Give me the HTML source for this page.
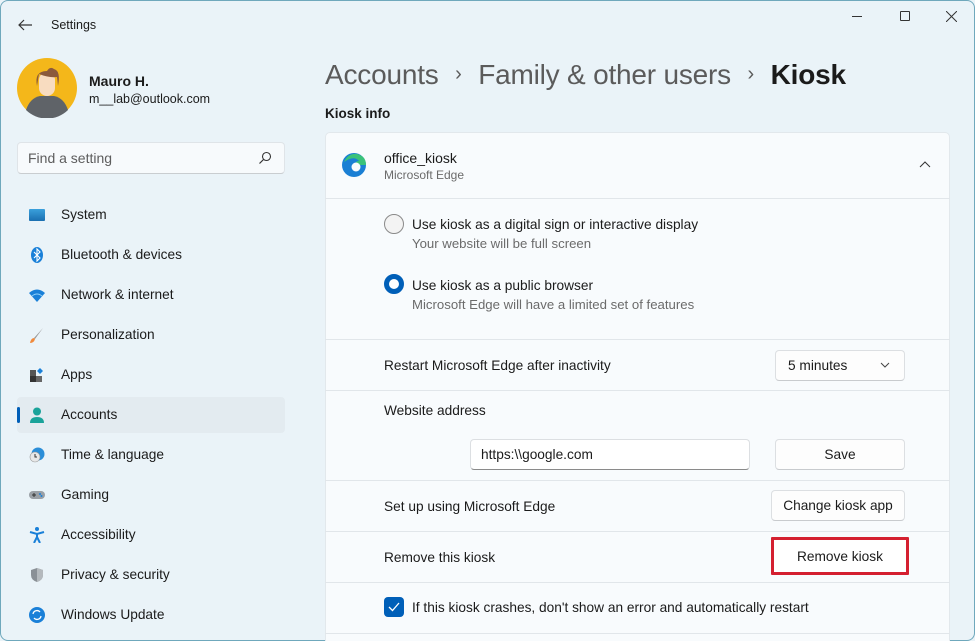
<!DOCTYPE html>
<html><head><meta charset="utf-8"><style>
*{box-sizing:border-box;margin:0;padding:0}
body{width:975px;height:641px;overflow:hidden;background:#eaf3f8;font-family:"Liberation Sans",sans-serif;color:#1b1b1b;position:relative;font-size:13.7px}
.win{position:absolute;left:0;top:0;width:975px;height:641px;box-shadow:inset 0 0 0 1px #6fa8bc;border-radius:8px;background:#eaf3f8;overflow:hidden}
.abs{position:absolute}
.nav{position:absolute;left:17px;height:36px;width:268px;border-radius:4px}
.nav .ic{position:absolute;left:12px;top:10px;width:16px;height:16px}
.nav .t{position:absolute;left:44px;top:10px;font-size:13.7px}
.card{position:absolute;left:325px;top:132px;width:625px;height:520px;background:#f8fbfd;border:1px solid #e2e8ec;border-radius:5px}
.hr{position:absolute;left:325px;width:625px;height:1px;background:#e1e6ea}
.btn{position:absolute;background:#fdfdfd;border:1px solid #dcdfe2;border-bottom-color:#c8cbce;border-radius:4px;text-align:center;font-size:13.7px}
.sub{color:#6b6b6b;font-size:13.2px}
</style></head><body><div class="win">
<svg class="abs" style="left:17px;top:18px" width="16" height="14"><path d="M15 7H2M7 2L2 7l5 5" stroke="#333" stroke-width="1.2" fill="none"/></svg>
<div class="abs" style="left:51px;top:18px;font-size:12.5px">Settings</div>
<div class="abs" style="left:852px;top:16px;width:10px;height:1px;background:#333"></div>
<div class="abs" style="left:900px;top:11px;width:10px;height:10px;border:1px solid #333;border-radius:1px"></div>
<svg class="abs" style="left:946px;top:11px" width="11" height="11"><path d="M0 0L11 11M11 0L0 11" stroke="#333" stroke-width="1"/></svg>

<svg class="abs" style="left:17px;top:58px" width="60" height="60"><circle cx="30" cy="30" r="30" fill="#f4b71a"/><path d="M9 52q4-12 14-14h14q10 2 14 14a30 30 0 0 1-42 0z" fill="#5f6368"/><rect x="22" y="14" width="16" height="24" rx="8" fill="#f8dcc0"/><path d="M20 28q-3-15 10-15 3-5 7-2 7 2 4 17l-1-9q-8 1-18-3z" fill="#8b5a3c"/></svg>
<div class="abs" style="left:89px;top:73px;font-size:14px;font-weight:bold">Mauro H.</div>
<div class="abs" style="left:89px;top:92px;font-size:12.5px">m__lab@outlook.com</div>

<div class="abs" style="left:17px;top:142px;width:268px;height:32px;background:#f7fafc;border:1px solid #dfe4e8;border-bottom-color:#c9cdd0;border-radius:4px"></div>
<div class="abs" style="left:28px;top:150px;color:#5d5d5d;font-size:14px">Find a setting</div>
<svg class="abs" style="left:258px;top:151px" width="14" height="14"><circle cx="8.5" cy="5.5" r="4" stroke="#333" fill="none" stroke-width="1.1"/><path d="M5.5 8.5L1.5 12.5" stroke="#333" stroke-width="1.2"/></svg>

<div class="nav" style="top:197px"><div class="ic" style="background:linear-gradient(#3aa0dc,#1a6fb0);height:12px;top:12px;border-radius:1px"></div><div class="t">System</div></div>
<div class="nav" style="top:237px"><svg class="ic" viewBox="0 0 16 16"><ellipse cx="8" cy="8" rx="6" ry="8" fill="#1a80d8"/><path d="M5 5l6 6-3 3V2l3 3-6 6" stroke="#fff" fill="none" stroke-width="1.1"/></svg><div class="t">Bluetooth &amp; devices</div></div>
<div class="nav" style="top:277px"><svg class="ic" viewBox="0 0 16 16"><path d="M0 6q8-7 16 0L8 15z" fill="#1a80d8"/><path d="M3 9q5-4 10 0" stroke="#8fd0f8" fill="none"/></svg><div class="t">Network &amp; internet</div></div>
<div class="nav" style="top:317px"><svg class="ic" viewBox="0 0 16 16"><path d="M14 1L5 11l1 1z" fill="#999"/><path d="M5 11q-3 0-4 5 4 0 5-4z" fill="#f08a3c"/></svg><div class="t">Personalization</div></div>
<div class="nav" style="top:357px"><svg class="ic" viewBox="0 0 16 16"><rect x="1" y="3" width="6" height="6" fill="#555"/><rect x="1" y="9" width="6" height="6" fill="#333"/><rect x="7" y="9" width="6" height="6" fill="#666"/><path d="M11 1l3 3-3 3-3-3z" fill="#1a80d8"/></svg><div class="t">Apps</div></div>
<div class="nav" style="top:397px;background:#e3ebf0"><div class="abs" style="left:0;top:10px;width:3px;height:16px;background:#005fb8;border-radius:2px"></div><svg class="ic" viewBox="0 0 16 16"><circle cx="8" cy="4.5" r="4" fill="#1aa39a"/><path d="M1 16q0-6 7-6 7 0 7 6z" fill="#1aa39a"/></svg><div class="t">Accounts</div></div>
<div class="nav" style="top:437px"><svg class="ic" viewBox="0 0 16 16"><circle cx="9" cy="7" r="6.5" fill="#2b8ed8"/><circle cx="6" cy="10" r="5" fill="#e8e8e8" stroke="#999" stroke-width=".6"/><path d="M6 7v3h2" stroke="#333" fill="none"/></svg><div class="t">Time &amp; language</div></div>
<div class="nav" style="top:477px"><svg class="ic" viewBox="0 0 16 16"><rect x="0" y="4" width="16" height="8" rx="4" fill="#9aa0a6"/><path d="M3 8h4M5 6v4" stroke="#333"/><circle cx="11" cy="7" r="1" fill="#1a80d8"/><circle cx="12.5" cy="9" r="1" fill="#1a80d8"/></svg><div class="t">Gaming</div></div>
<div class="nav" style="top:517px"><svg class="ic" viewBox="0 0 16 16"><circle cx="8" cy="2" r="2" fill="#1a80d8"/><path d="M1 5l7 2 7-2M8 7v3l-3 6M8 10l3 6" stroke="#1a80d8" stroke-width="2" fill="none"/></svg><div class="t">Accessibility</div></div>
<div class="nav" style="top:557px"><svg class="ic" viewBox="0 0 16 16"><path d="M8 1l6 2v5q0 5-6 7-6-2-6-7V3z" fill="#8a9096"/><path d="M8 1l6 2v5q0 5-6 7z" fill="#b4b9bd"/></svg><div class="t">Privacy &amp; security</div></div>
<div class="nav" style="top:597px"><svg class="ic" viewBox="0 0 16 16"><circle cx="8" cy="8" r="8" fill="#1a80d8"/><path d="M4 7a4 4 0 0 1 7-2M12 9a4 4 0 0 1-7 2" stroke="#fff" fill="none" stroke-width="1.3"/></svg><div class="t">Windows Update</div></div>

<div class="abs" style="left:325px;top:59px;font-size:28px;color:#5b5b5b;white-space:nowrap;letter-spacing:-0.2px">Accounts <span style="font-size:20px;position:relative;top:-4px;margin:0 9px">›</span> Family &amp; other users <span style="font-size:20px;position:relative;top:-4px;margin:0 9px">›</span> <b style="color:#1b1b1b">Kiosk</b></div>
<div class="abs" style="left:325px;top:106px;font-size:13.5px;font-weight:bold">Kiosk info</div>

<div class="card"></div>
<svg class="abs" style="left:341px;top:152px" width="26" height="26" viewBox="0 0 26 26"><circle cx="13" cy="13" r="12" fill="#1a7fd4"/><path d="M3 10q4-9 13-8 9 2 9 11h-11q0-4 4-4-5-6-15 1z" fill="#3ac27a"/><circle cx="15" cy="15" r="4.5" fill="#f8fbfd"/></svg>
<div class="abs" style="left:384px;top:150px;font-size:14px">office_kiosk</div>
<div class="abs sub" style="left:384px;top:168px;font-size:12px">Microsoft Edge</div>
<svg class="abs" style="left:919px;top:160px" width="12" height="8"><path d="M1 7l5-5 5 5" stroke="#333" fill="none"/></svg>
<div class="hr" style="top:198px"></div>

<div class="abs" style="left:384px;top:214px;width:20px;height:20px;border:1px solid #8a8a8a;border-radius:50%;background:#f3f3f3"></div>
<div class="abs" style="left:412px;top:217px">Use kiosk as a digital sign or interactive display</div>
<div class="abs sub" style="left:412px;top:236px">Your website will be full screen</div>
<div class="abs" style="left:384px;top:274px;width:20px;height:20px;border:5px solid #005fb8;border-radius:50%;background:#fff"></div>
<div class="abs" style="left:412px;top:278px">Use kiosk as a public browser</div>
<div class="abs sub" style="left:412px;top:297px">Microsoft Edge will have a limited set of features</div>
<div class="hr" style="top:339px"></div>

<div class="abs" style="left:384px;top:358px">Restart Microsoft Edge after inactivity</div>
<div class="btn" style="left:775px;top:350px;width:130px;height:31px;text-align:left;padding:7px 0 0 12px">5 minutes</div>
<svg class="abs" style="left:880px;top:362px" width="10" height="6"><path d="M1 1l4 4 4-4" stroke="#444" fill="none"/></svg>
<div class="hr" style="top:390px"></div>

<div class="abs" style="left:384px;top:403px">Website address</div>
<div class="abs" style="left:470px;top:439px;width:280px;height:31px;background:#fff;border:1px solid #dcdfe2;border-bottom-color:#8a8a8a;border-radius:4px;padding:7px 0 0 10px">https:\\google.com</div>
<div class="btn" style="left:775px;top:439px;width:130px;height:31px;padding-top:7px">Save</div>
<div class="hr" style="top:480px"></div>

<div class="abs" style="left:384px;top:499px">Set up using Microsoft Edge</div>
<div class="btn" style="left:771px;top:490px;width:134px;height:31px;padding-top:7px">Change kiosk app</div>
<div class="hr" style="top:531px"></div>

<div class="abs" style="left:384px;top:550px">Remove this kiosk</div>
<div class="btn" style="left:771px;top:537px;width:138px;height:38px;border:3px solid #d42030;border-radius:1px;padding-top:9px;background:#fff">Remove kiosk</div>
<div class="hr" style="top:582px"></div>

<div class="abs" style="left:384px;top:597px;width:20px;height:20px;background:#005fb8;border-radius:4px"></div>
<svg class="abs" style="left:388px;top:602px" width="12" height="10"><path d="M1 5l3.5 3.5L11 1" stroke="#fff" fill="none" stroke-width="1.3"/></svg>
<div class="abs" style="left:412px;top:600px">If this kiosk crashes, don't show an error and automatically restart</div>
<div class="hr" style="top:633px"></div>
</div></body></html>
